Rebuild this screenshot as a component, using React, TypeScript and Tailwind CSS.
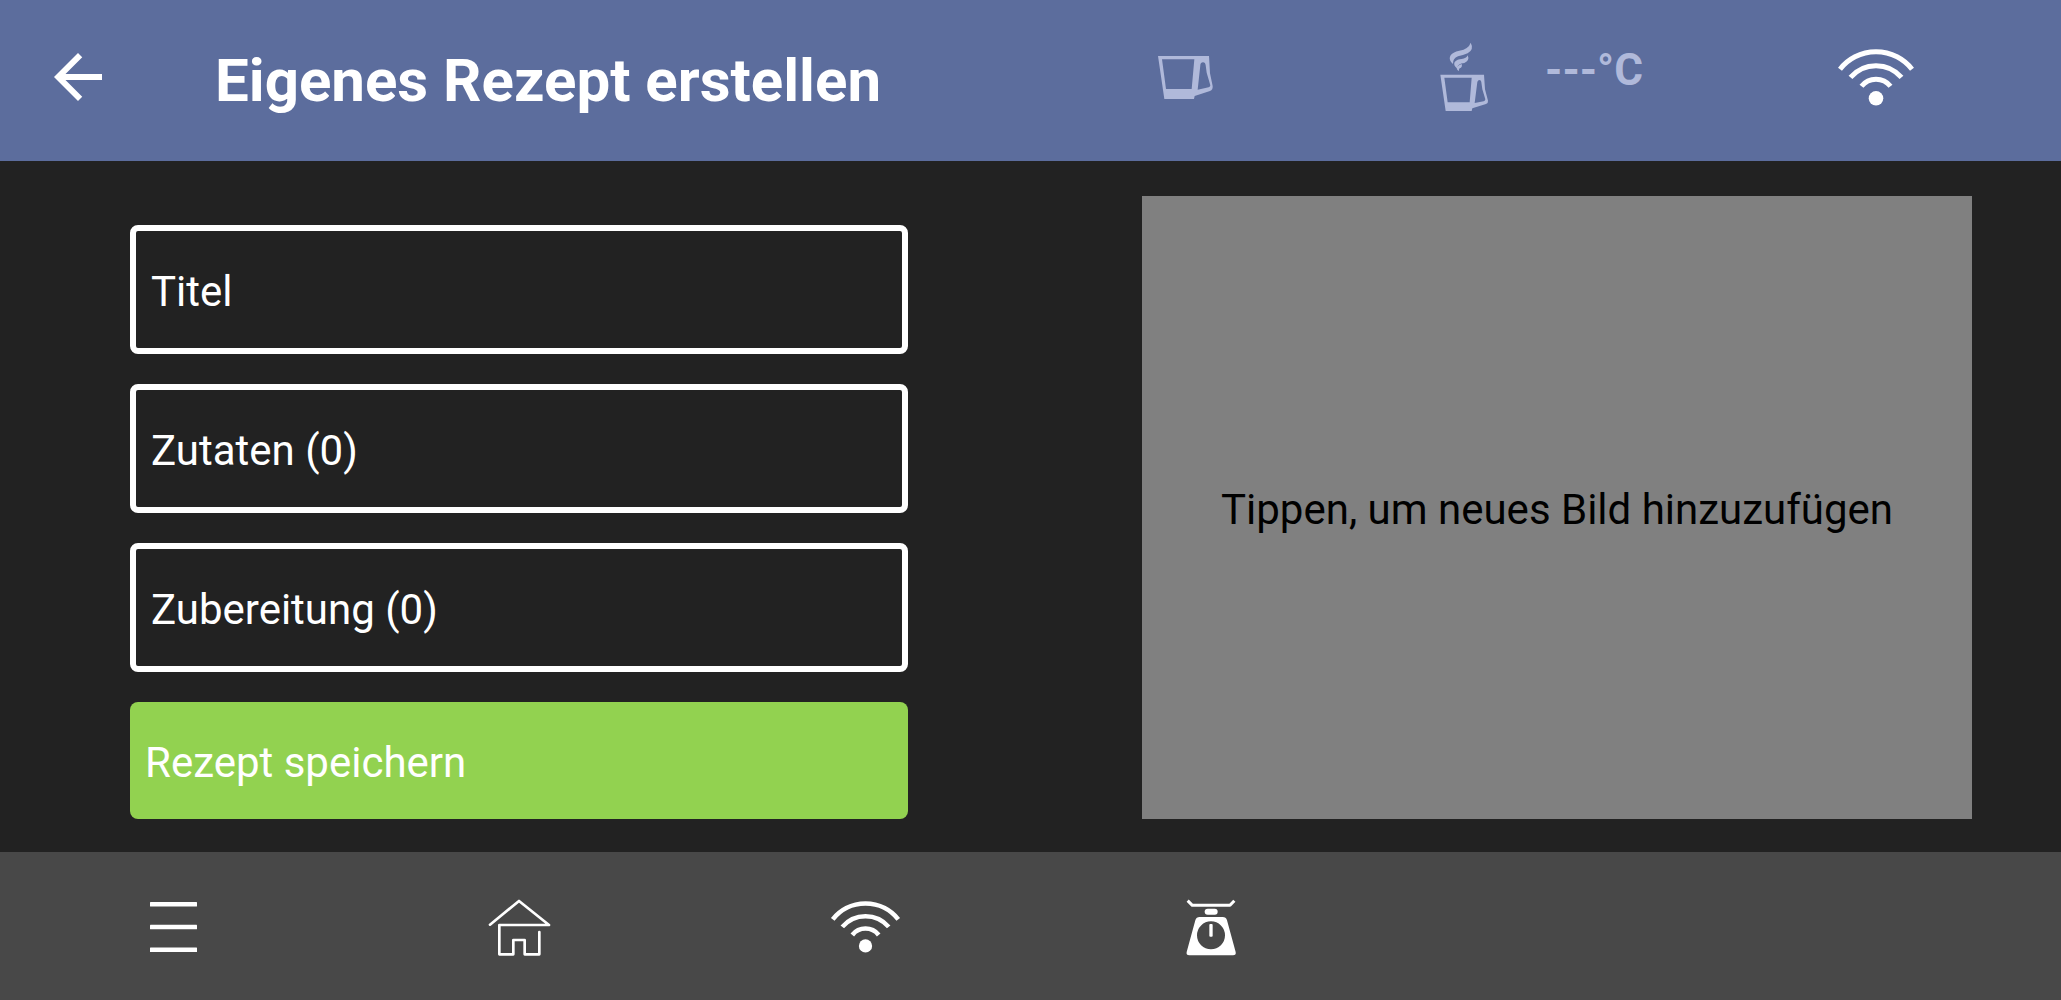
import { useState } from 'react'

interface IconProps {
  className?: string
}

function BackIcon({ className }: IconProps) {
  return (
    <svg viewBox="0 0 24 24" fill="currentColor" className={className} aria-hidden="true">
      <path d="M20 11H7.83l5.59-5.59L12 4l-8 8 8 8 1.41-1.41L7.83 13H20v-2z" />
    </svg>
  )
}

function CupIcon({ className }: IconProps) {
  return (
    <svg viewBox="45 45 180 135" fill="currentColor" fillRule="evenodd" className={className} aria-hidden="true">
      <path d="M54 48H207L210 100L218 138Q219 150 210 153L164 168L162 177H73ZM66 58H163L155 147H78ZM181 76Q181 68 189 67Q196 67 197 76L200 98L211 136Q211 141 206 142L173 149Z" />
    </svg>
  )
}

function HotCupIcon({ className }: IconProps) {
  return (
    <svg viewBox="60 38 150 210" fill="currentColor" fillRule="evenodd" className={className} aria-hidden="true">
      <path d="M152 40Q163 60 143 72Q129 78 114 81Q98 87 99 104Q85 92 91 79Q98 68 118 64Q146 59 152 40Z" />
      <path d="M143 78Q150 93 133 101Q112 103 111 117Q99 108 104 98Q112 89 125 89Q139 88 143 78Z" />
      <path d="M125 104Q128 114 119 117Q116 119 117 125Q108 120 111 112Q116 107 125 104Z" />
      <path d="M61 136H192L195 180L204 214Q205 221 198 224L157 237L155 245H77ZM73 145H155L149 219H83ZM172 158Q173 152 179 152Q184 153 184 159L187 180L196 210Q196 215 191 216L164 221Z" />
    </svg>
  )
}

function WifiIcon({ className }: IconProps) {
  return (
    <svg viewBox="0 0 78 60" fill="none" stroke="currentColor" strokeWidth="5" className={className} aria-hidden="true">
      <path d="M3 22.2A45.8 45.8 0 0 1 75 22.2" />
      <path d="M13.5 30.4A33.6 33.6 0 0 1 64.5 30.4" />
      <path d="M24.5 39.3A18.5 18.5 0 0 1 53.5 39.3" />
      <circle cx="39" cy="51.3" r="7.3" fill="currentColor" stroke="none" />
    </svg>
  )
}

function MenuIcon({ className }: IconProps) {
  return (
    <svg viewBox="0 0 47 52" fill="currentColor" className={className} aria-hidden="true">
      <rect y="1" width="47" height="4.5" rx="0.5" />
      <rect y="23.7" width="47" height="4.5" rx="0.5" />
      <rect y="46.4" width="47" height="4.5" rx="0.5" />
    </svg>
  )
}

function HomeIcon({ className }: IconProps) {
  return (
    <svg
      viewBox="48 48 195 174"
      fill="none"
      stroke="currentColor"
      strokeWidth="8"
      strokeLinecap="round"
      strokeLinejoin="round"
      className={className}
      aria-hidden="true"
    >
      <path d="M57 128L144 57L234 129H85V217H127V174H161V217H205V150" />
    </svg>
  )
}

function ScaleIcon({ className }: IconProps) {
  return (
    <svg viewBox="75 48 156 174" fill="currentColor" className={className} aria-hidden="true">
      <path d="M83 56L97 70H210L223 56" fill="none" stroke="currentColor" strokeWidth="9" strokeLinejoin="round" />
      <rect x="134" y="80" width="39" height="18" rx="9" />
      <path
        fillRule="evenodd"
        d="M119 105H188Q198 105 201 115L227 210Q229 220 219 220H88Q78 220 80 210L106 115Q109 105 119 105ZM153 118A42 42 0 1 0 153 202A42 42 0 1 0 153 118Z"
      />
      <rect x="148" y="126" width="10" height="38" rx="3" />
    </svg>
  )
}

const navItems = [
  { label: 'Menü', icon: <MenuIcon className="w-[47px] h-[52px]" /> },
  { label: 'Startseite', icon: <HomeIcon className="w-[65px] h-[58px]" /> },
  { label: 'WLAN', icon: <WifiIcon className="w-[71px] h-[55px]" /> },
  { label: 'Waage', icon: <ScaleIcon className="w-[52px] h-[58px]" /> },
]

const fieldClass =
  'w-full h-[129px] shrink-0 rounded-lg border-6 border-white bg-transparent px-[15px] pt-1 text-left text-white placeholder:text-white placeholder:opacity-100 focus:outline-none'

export default function App() {
  const [title, setTitle] = useState('')
  const [ingredients] = useState<string[]>([])
  const [steps] = useState<string[]>([])

  return (
    <div className="min-h-screen flex flex-col bg-[#222222] font-[Roboto,sans-serif] text-[42px] text-white">
      {/* Header */}
      <header className="flex items-center h-[161px] pl-[42px] pr-[146px] pb-[7px] bg-[#5c6d9d]">
        <button type="button" aria-label="Zurück" className="shrink-0">
          <BackIcon className="size-[72px]" />
        </button>
        <h1 className="flex-1 pl-[101px] pt-[7px] text-[60px] font-bold whitespace-nowrap">
          Eigenes Rezept erstellen
        </h1>
        <div className="flex items-center shrink-0 text-[#b0b9da]">
          <CupIcon className="w-[60px] h-[45px]" />
          <HotCupIcon className="w-[50px] h-[70px] ml-[225px]" />
          <span className="ml-[55px] pb-[14px] text-[44px] font-bold">---°C</span>
        </div>
        <WifiIcon className="shrink-0 w-[78px] h-[60px] ml-[194px]" />
      </header>

      {/* Recipe form */}
      <main className="flex-1 grid grid-cols-[778fr_830fr] gap-[234px] pl-[130px] pr-[89px] pt-[35px] pb-[33px]">
        <form className="flex flex-col gap-[30px] pt-[29px]" onSubmit={(e) => e.preventDefault()}>
          <input
            type="text"
            aria-label="Titel"
            placeholder="Titel"
            value={title}
            onChange={(e) => setTitle(e.target.value)}
            className={fieldClass}
          />
          <button type="button" className={fieldClass}>
            Zutaten ({ingredients.length})
          </button>
          <button type="button" className={fieldClass}>
            Zubereitung ({steps.length})
          </button>
          <button type="submit" className="w-full h-[117px] shrink-0 rounded-lg bg-[#92d250] px-[15px] pt-1 text-left">
            Rezept speichern
          </button>
        </form>
        <button type="button" className="bg-[#808080] pt-1 text-center text-black">
          Tippen, um neues Bild hinzuzufügen
        </button>
      </main>

      {/* Bottom navigation */}
      <nav className="grid grid-cols-[repeat(5,346fr)_331fr] h-[149px] bg-[#484848]">
        {navItems.map((item) => (
          <button key={item.label} type="button" aria-label={item.label} className="flex items-center justify-center">
            {item.icon}
          </button>
        ))}
      </nav>
    </div>
  )
}
